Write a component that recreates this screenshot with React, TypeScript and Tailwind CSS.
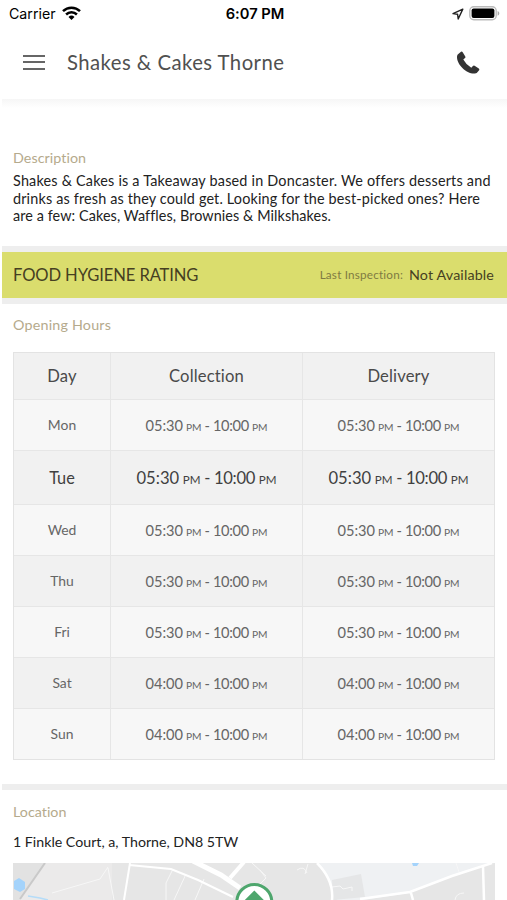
const hours = [
  { day: 'Mon', open: '05:30', h: 'h-[51px]', bg: 'bg-[#f7f7f7]' },
  { day: 'Tue', open: '05:30', h: 'h-[54px]', bg: 'bg-[#f1f1f1]', today: true },
  { day: 'Wed', open: '05:30', h: 'h-[51px]', bg: 'bg-[#f7f7f7]' },
  { day: 'Thu', open: '05:30', h: 'h-[51px]', bg: 'bg-[#f1f1f1]' },
  { day: 'Fri', open: '05:30', h: 'h-[51px]', bg: 'bg-[#f7f7f7]' },
  { day: 'Sat', open: '04:00', h: 'h-[51px]', bg: 'bg-[#f1f1f1]' },
  { day: 'Sun', open: '04:00', h: 'h-[50px]', bg: 'bg-[#f7f7f7]' },
];

function TimeRange({ open, today }: { open: string; today?: boolean }) {
  const pm = today ? 'text-[11.6px]' : 'text-[10.2px]';
  return (
    <span className={`flex items-baseline justify-between whitespace-nowrap ${today ? 'w-[140px] text-[16.6px] text-[#404040]' : 'w-[122px] text-[14.6px] text-[#666]'}`}>
      <span>{open}</span>
      <span className={pm}>PM</span>
      <span>-</span>
      <span className="tracking-[-0.3px]">10:00</span>
      <span className={pm}>PM</span>
    </span>
  );
}

function StatusBar() {
  return (
    <div className="grid h-[27px] grid-cols-3 items-center pr-[7px] pl-[9px] font-['Inter',sans-serif] text-black">
      <div className="flex items-center gap-[6px]">
        <span className="text-[14.2px]">Carrier</span>
        <svg width="19" height="14" viewBox="0 0 19 14" fill="none" stroke="#000" strokeWidth="2.5">
          <path d="M1 5.1a12.2 12.2 0 0 1 17 0" />
          <path d="M4.1 8.5a7.7 7.7 0 0 1 10.8 0" />
          <path d="M6.5 11a4.4 4.4 0 0 1 6 0L9.5 14z" fill="#000" stroke="none" />
        </svg>
      </div>
      <span className="pt-[2px] pl-px text-center text-[14.7px] font-semibold">6:07 PM</span>
      <div className="flex items-center justify-end gap-[5px]">
        <svg width="12" height="12" viewBox="0 0 12 12" fill="none" stroke="#222" strokeWidth="1.4" strokeLinejoin="round">
          <path d="M10.800 1.100 1 5.600l4.600.7.6 4.700z" />
        </svg>
        <svg width="31" height="15" viewBox="0 0 31 15">
          <rect x=".8" y=".8" width="26.4" height="13" rx="4" fill="#fff" stroke="#bbb" strokeWidth="1.4" />
          <rect x="2.6" y="2.6" width="22.8" height="9.4" rx="2" fill="#000" />
          <path d="M28.600 5c2.300 1 2.300 3.700 0 4.700z" fill="#aaa" />
        </svg>
      </div>
    </div>
  );
}

function LocationMap() {
  return (
    <svg className="block" width="482" height="37" viewBox="13 863 482 37" fill="none">
      <path fill="#e6e6e6" d="M13 863h482v37H13z" />
      <path fill="#ebeaea" d="M13 863h99v37H13z" />
      <path fill="#e2e2e2" d="M13 863h32L20 900h-7z" />
      <path fill="#eff1f3" d="M317 863h178l-13 2-73 28-46 7h-26l-7-18z" />
      <path fill="#e5e6e7" d="m332 880 29-6 4 23-32 3z" />
      <path stroke="#c9c9c9" strokeWidth="2" d="M45 863 20 899" />
      <path fill="#a4d3fb" d="m14 881 5-3 6 4v7l-5 3-6-3zM412 863h7l-2 3h-4z" />
      <path stroke="#b5dcf8" strokeWidth="1.5" d="m28 896 12 2 8 2" />
      <g stroke="#f7f7f7" strokeWidth="1">
        <path d="M108 867l-8 12-48 14M108 868l6 32M173 869l-7 14v17M204 879l-9 21M186 874l-12 26M260 870l6 8-8 8M252 863l14 13M332 887l8-1 3 3 9-2v4M456 863l3 9" />
        <path d="M297 870q7-5 10 3M308 864l-3 10M455 900q1-7 9-7" />
      </g>
      <g stroke="#fff">
        <path strokeWidth="2" d="m130 863-6 37M129 865l42 4 27 11 35 17" />
        <path strokeWidth="5" d="m193 861 28 14 19 13" />
        <path strokeWidth="4" d="m244 862-14 16" />
        <path strokeWidth="2.500" d="M317 863q17 17 15 37" />
        <path strokeWidth="2.500" d="m360 899 50-7 42-16 40-13M411 893l2 7M483 866l1 34" />
      </g>
      <circle cx="254.300" cy="902" r="17.500" fill="#fff" stroke="#4ea66d" strokeWidth="3" />
      <path fill="#4ea66d" d="m254.300 890.500 13 13h-26z" />
    </svg>
  );
}

export default function App() {
  return (
    <main className="flex h-[900px] w-[507px] flex-col overflow-hidden bg-white font-['Lato',sans-serif] text-[#222] [font-variant-ligatures:none]">
      <StatusBar />
      <header className="flex h-[72px] shrink-0 items-center pr-[27px] pl-[23px]">
        <div className="mb-[2px] flex w-[22px] flex-col gap-[4.500px]">
          <i className="h-[2px] bg-[#666]" />
          <i className="h-[2px] bg-[#666]" />
          <i className="h-[2px] bg-[#666]" />
        </div>
        <h1 className="mb-[3px] ml-[22px] text-[20.300px] leading-6 tracking-[0.460px] whitespace-nowrap text-[#505050]">Shakes &amp; Cakes Thorne</h1>
        <svg className="ml-auto" width="24" height="24" viewBox="0 0 24 24" fill="#333">
          <path d="M2 3.200 5 .800q1-.6 1.700.4l2.600 4.200q.5 1-.3 1.700L7.300 8.500q2.800 5.300 8 8.200l1.600-1.700q.8-.7 1.700-.2l4.200 2.700q1 .7.300 1.700-2 3.100-4.100 3.300C10.500 23.200 1 13.500 1 6.200 1 5 1.300 3.900 2 3.200z" />
        </svg>
      </header>
      <div className="ml-[2px] h-[9px] shrink-0 bg-linear-to-b from-[#f6f6f6] to-white" />

      <section className="flex h-[138px] shrink-0 flex-col pt-[41px] pl-[13px]">
        <h2 className="text-[14.300px] leading-[18px] tracking-[0.050px] text-[#b5aa8c]">Description</h2>
        <p className="mt-[5px] text-[14.400px] leading-[17.700px] tracking-[0.200px] whitespace-nowrap">
          Shakes &amp; Cakes is a Takeaway based in Doncaster. We offers desserts and<br />
          <span className="tracking-[0.160px]">drinks as fresh as they could get. Looking for the best-picked ones? Here</span><br />
          <span className="tracking-[0.080px]">are a few: Cakes, Waffles, Brownies &amp; Milkshakes.</span>
        </p>
      </section>

      <section className="ml-[2px] flex h-[58px] shrink-0 items-center border-y-[6px] border-[#eee] bg-[#dadd6d] pr-[13px] pl-[11px] text-[#463f22]">
        <h2 className="text-[16.600px] tracking-[-0.120px]">FOOD HYGIENE RATING</h2>
        <span className="ml-auto text-[11.700px] tracking-[0.200px] text-[#7f7b42]">Last Inspection:</span>
        <span className="ml-[6px] text-[14.300px] tracking-[0.130px]">Not Available</span>
      </section>

      <section className="flex h-[480px] shrink-0 flex-col pt-[12px] pl-[13px]">
        <h2 className="text-[14.300px] leading-[18px] tracking-[0.200px] text-[#b5aa8c]">Opening Hours</h2>
        <div className="mt-[18px] w-[482px] border border-[#e3e3e3]">
          <div className="grid h-[47px] grid-cols-[97px_192px_1fr] divide-x divide-[#e6e6e6] border-b border-[#e6e6e6] bg-[#f1f1f1] text-[16.600px] tracking-[0.150px] text-[#4a4a4a]">
            {['Day', 'Collection', 'Delivery'].map((t) => (
              <span key={t} className="flex items-center justify-center pt-px">{t}</span>
            ))}
          </div>
          {hours.map((r) => (
            <div key={r.day} className={`grid grid-cols-[97px_192px_1fr] divide-x divide-[#e6e6e6] border-b border-[#e6e6e6] last:border-b-0 ${r.h} ${r.bg}`}>
              <span className={`flex items-center justify-center pt-px ${r.today ? 'text-[16.300px] text-[#404040]' : 'text-[13.900px] text-[#666]'}`}>{r.day}</span>
              <span className="flex items-center justify-center pt-[2px]"><TimeRange open={r.open} today={r.today} /></span>
              <span className="flex items-center justify-center pt-[2px]"><TimeRange open={r.open} today={r.today} /></span>
            </div>
          ))}
        </div>
      </section>

      <section className="flex flex-col">
        <div className="ml-[2px] h-[6px] bg-[#eee]" />
        <div className="pl-[13px]">
          <h2 className="mt-[13px] text-[14.300px] leading-[18px] text-[#b5aa8c]">Location</h2>
          <p className="mt-[12px] mb-[12px] text-[14.200px] leading-[18px] whitespace-nowrap">1 Finkle Court, a, Thorne, DN8 5TW</p>
          <LocationMap />
        </div>
      </section>
    </main>
  );
}
